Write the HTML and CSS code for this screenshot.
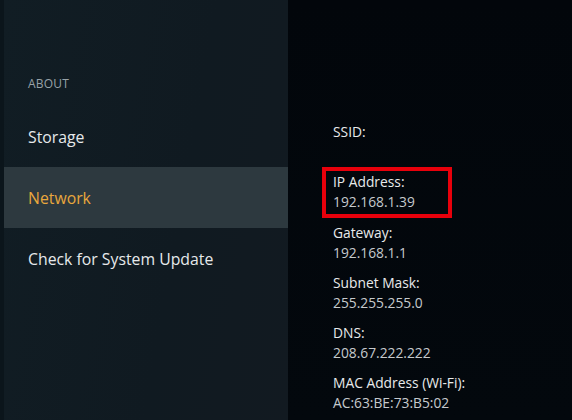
FILE: index.html
```html
<!DOCTYPE html>
<html>
<head>
<meta charset="utf-8">
<link rel="stylesheet" href="styles.css">
</head>
<body>
<div class="screen">
  <nav class="sidebar">
    <div class="section-title">ABOUT</div>
    <div class="menu-item">Storage</div>
    <div class="menu-item active">Network</div>
    <div class="menu-item">Check for System Update</div>
  </nav>
  <main class="details">
    <div class="field">
      <div class="label">SSID:</div>
      <div class="value">&nbsp;</div>
    </div>
    <div class="field highlighted">
      <div class="label">IP Address:</div>
      <div class="value">192.168.1.39</div>
    </div>
    <div class="field">
      <div class="label">Gateway:</div>
      <div class="value">192.168.1.1</div>
    </div>
    <div class="field">
      <div class="label">Subnet Mask:</div>
      <div class="value">255.255.255.0</div>
    </div>
    <div class="field">
      <div class="label">DNS:</div>
      <div class="value">208.67.222.222</div>
    </div>
    <div class="field">
      <div class="label">MAC Address (Wi-Fi):</div>
      <div class="value">AC:63:BE:73:B5:02</div>
    </div>
  </main>
</div>
</body>
</html>
```

FILE: styles.css
```css
html, body {
  margin: 0;
  padding: 0;
  width: 572px;
  height: 420px;
  overflow: hidden;
  background: #03070c;
  font-family: "Open Sans", "Noto Sans", sans-serif;
}

.screen {
  display: flex;
  width: 572px;
  height: 420px;
}

.sidebar {
  width: 284px;
  flex: none;
  border-left: 4px solid #0b151b;
  background: linear-gradient(100deg, #111d24 0%, #101a21 60%, #121a21 100%);
  padding-top: 76px;
  box-sizing: content-box;
}

.section-title {
  padding-left: 24px;
  font-size: 12px;
  line-height: 16px;
  color: #98a2a8;
  margin-bottom: 14px;
  letter-spacing: 0.2px;
}

.menu-item {
  height: 61px;
  display: flex;
  align-items: center;
  padding-left: 24px;
  box-sizing: border-box;
  font-size: 15.8px;
  color: #e6e9eb;
}

.menu-item.active {
  background: #2d393f;
  color: #e9a73c;
}

.details {
  flex: 1;
  padding-left: 45px;
  padding-top: 122px;
  background: linear-gradient(180deg, #02060b 0%, #03080d 100%);
  display: flex;
  flex-direction: column;
  gap: 10.3px;
}

.field {
  position: relative;
  font-size: 13.8px;
  line-height: 20px;
}

.label {
  color: #e8eaeb;
}

.value {
  color: #c6cacd;
}

.highlighted::after {
  content: "";
  position: absolute;
  left: -11px;
  top: -5px;
  width: 130px;
  height: 51px;
  box-sizing: border-box;
  border: 4px solid #e8000b;
}
```
